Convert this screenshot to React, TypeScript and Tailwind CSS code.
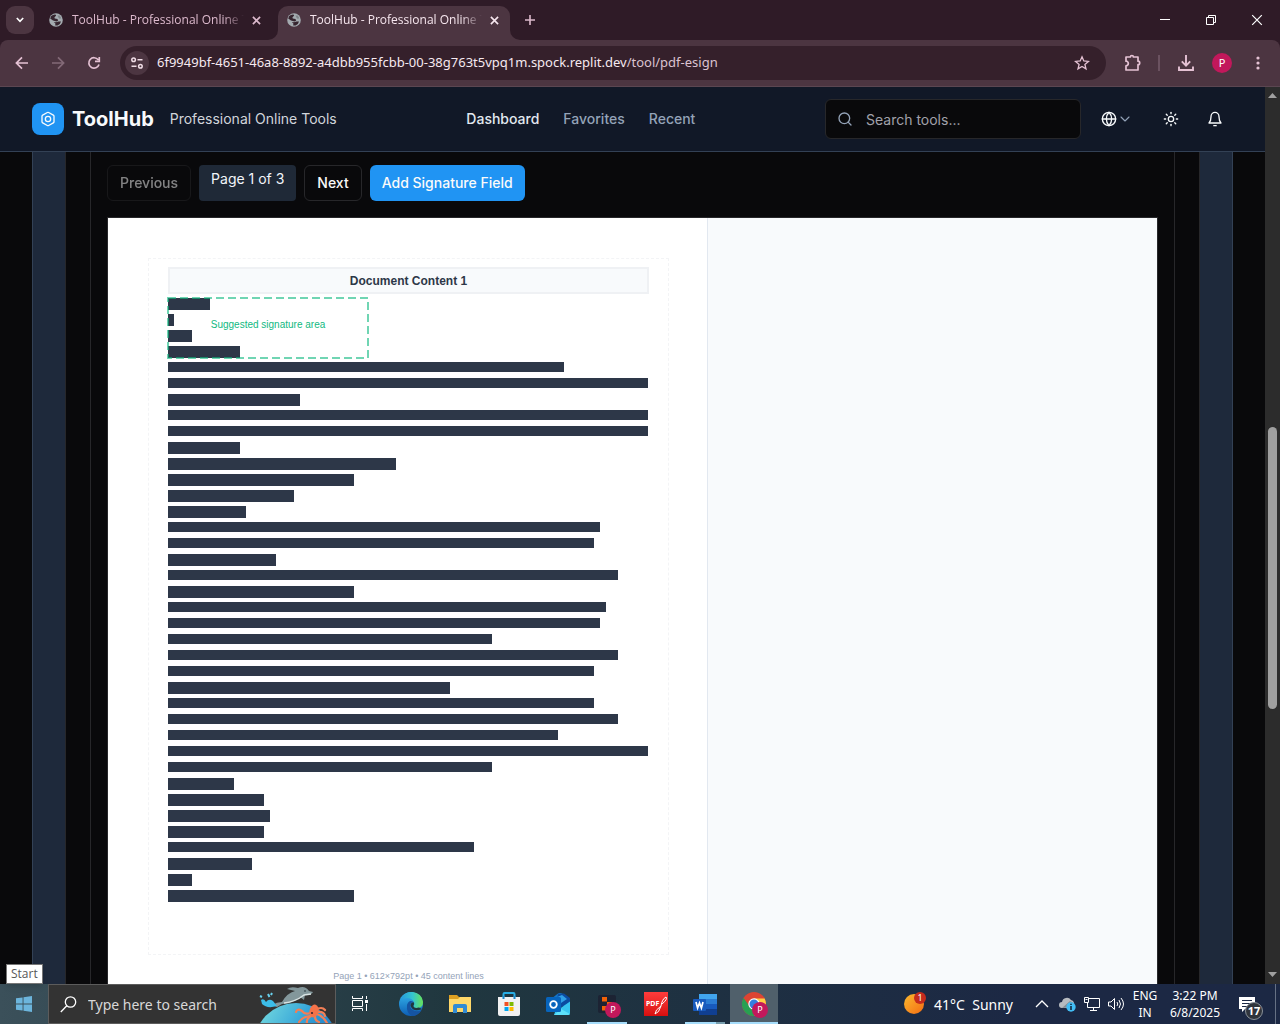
import React from "react";
import { Search, Globe, ChevronDown, Sun, Bolt } from "lucide-react";

const lineWidths = [
  42, 6, 24, 72, 396, 480, 132, 480, 480, 72, 228, 186, 126, 78, 432, 426, 108, 450, 186, 438, 432, 324, 450, 426, 282,
  426, 450, 390, 480, 324, 66, 96, 102, 96, 306, 84, 24, 186,
];

const SYSTEM = "font-['Noto_Sans',sans-serif]";

function FavGlobe() {
  return (
    <svg width="14" height="14" viewBox="0 0 14 14" className="shrink-0" aria-hidden="true">
      <circle cx="7" cy="7" r="6.8" fill="#a4abb0" />
      <path d="M2.2 3 Q4 1.2 6.4 1.4 L7.2 2.6 L5.4 4.4 L5.8 5.6 L8.4 6 L9.2 7.6 L7.6 8.4 L4 7.6 L1.2 5.6 Z" fill="#36252f" />
      <path d="M4.8 9 L7 9.2 L9.6 8.6 L12 8.4 Q11.6 11 8.6 12.4 L6.2 12.6 L6.4 10.6 Z" fill="#36252f" />
      <path d="M8.4 2.6 L10.6 2.4 L12.2 5 L10.8 6 L9.4 4.6 Z" fill="#7f8489" />
    </svg>
  );
}

function CloseX({ size = 10, width = 1.8 }: { size?: number; width?: number }) {
  return (
    <svg width={size} height={size} viewBox="0 0 10 10" stroke="currentColor" strokeWidth={width} fill="none" aria-hidden="true">
      <path d="M1 1 L9 9 M9 1 L1 9" />
    </svg>
  );
}

function TabLabel() {
  return (
    <>
      <FavGlobe />
      <span className="ml-[9px] w-[172px] whitespace-nowrap font-['Open_Sans',sans-serif] text-[12px] [mask-image:linear-gradient(to_right,black_88%,transparent)]">ToolHub - Professional Online T</span>
      <button aria-label="Close tab" className="ml-1.5 p-0.5"><CloseX size={9} /></button>
    </>
  );
}

function TabStrip() {
  return (
    <div className={`flex h-10 shrink-0 items-stretch bg-[#2f1b27] text-[12px] text-[#dcb9cc] ${SYSTEM}`}>
      <button aria-label="Search tabs" className="ml-1.5 mt-1.5 flex h-7 w-7 shrink-0 items-center justify-center rounded-[9px] bg-[#4c3541] text-white">
        <svg width="8" height="6" viewBox="0 0 8 6" fill="none" stroke="currentColor" strokeWidth="1.6"><path d="M0.8 1 L4 4.4 L7.2 1" /></svg>
      </button>
      <div className="ml-[15px] flex w-[229px] items-center"><TabLabel /></div>
      <div className="relative mt-1.5 flex w-[232px] items-center rounded-t-[10px] bg-[#4c3541] pb-1.5 pl-[9px] text-[#f6e6ee]">
        <svg className="absolute -left-2.5 bottom-0" width="10" height="10" aria-hidden="true"><path d="M10 0 V10 H0 A10 10 0 0 0 10 0" fill="#4c3541" /></svg>
        <svg className="absolute -right-2.5 bottom-0" width="10" height="10" aria-hidden="true"><path d="M0 0 V10 H10 A10 10 0 0 1 0 0" fill="#4c3541" /></svg>
        <TabLabel />
      </div>
      <button aria-label="New tab" className="ml-[15px]">
        <svg width="10" height="10" viewBox="0 0 10 10" stroke="currentColor" strokeWidth="1.6"><path d="M5 0 V10 M0 5 H10" /></svg>
      </button>
      <div className="ml-auto flex items-stretch text-white">
        <button aria-label="Minimize" className="flex w-[46px] items-center justify-center">
          <svg width="10" height="10"><path d="M0 4.5 H10" stroke="currentColor" /></svg>
        </button>
        <button aria-label="Restore" className="flex w-[46px] items-center justify-center">
          <svg width="10" height="10" fill="none" stroke="currentColor"><path d="M0.5 2.5 H7.5 V9.5 H0.5 Z M2.5 2.5 V0.5 H9.5 V7.5 H7.5" /></svg>
        </button>
        <button aria-label="Close" className="flex w-[46px] items-center justify-center"><CloseX size={12} width={1} /></button>
      </div>
    </div>
  );
}

function Toolbar() {
  return (
    <div className="shrink-0 bg-[#2f1b27]">
      <div className="flex h-[47px] items-center rounded-t-[8px] border-b border-[#5b4651] bg-[#4c3541] text-[#e5c2d4]">
        <button aria-label="Back" className="ml-[15px]">
          <svg width="14" height="14" fill="none" stroke="currentColor" strokeWidth="1.7"><path d="M13 7 H1.6 M7 1.4 L1.4 7 L7 12.6" /></svg>
        </button>
        <button aria-label="Forward" className="ml-[22px] text-[#836a77]">
          <svg width="14" height="14" fill="none" stroke="currentColor" strokeWidth="1.7"><path d="M1 7 H12.4 M7 1.4 L12.6 7 L7 12.6" /></svg>
        </button>
        <button aria-label="Reload" className="ml-[22px]">
          <svg width="14" height="14" fill="none" stroke="currentColor" strokeWidth="1.7"><path d="M12 8.5 A5.2 5.2 0 1 1 11.2 3.8 M12.3 1 V5.3 H8" /></svg>
        </button>
        <div className="ml-[19px] flex h-[34px] flex-1 items-center rounded-full bg-[#35202b] pl-[5px] pr-4">
          <button aria-label="Site information" className="flex h-6 w-6 items-center justify-center rounded-full bg-[#4c3541] text-[#f0dde6]">
            <svg width="12" height="12" fill="none" stroke="currentColor" strokeWidth="1.5"><circle cx="2.6" cy="2.8" r="1.8" /><path d="M6.5 2.8 H11.5 M0.5 9.2 H5.5" /><circle cx="9.4" cy="9.2" r="1.8" /></svg>
          </button>
          <span className={`ml-2 whitespace-nowrap text-[13px] text-[#f6e9f0] ${SYSTEM}`}>
            6f9949bf-4651-46a8-8892-a4dbb955fcbb-00-38g763t5vpq1m.spock.replit.dev<span className="text-[#dcc3d0]">/tool/pdf-esign</span>
          </span>
          <button aria-label="Bookmark this tab" className="ml-auto">
            <svg width="16" height="16" viewBox="0 0 16 16" fill="none" stroke="currentColor" strokeWidth="1.3"><path d="M8 1.8 L9.8 6 L14.4 6.4 L10.9 9.4 L12 13.8 L8 11.4 L4 13.8 L5.1 9.4 L1.6 6.4 L6.2 6 Z" /></svg>
          </button>
        </div>
        <button aria-label="Extensions" className="ml-[18px]">
          <svg width="18" height="18" viewBox="0 0 18 18" fill="none" stroke="currentColor" strokeWidth="1.7"><path d="M2 3 H6.4 A1.5 1.5 0 0 1 9.4 3 H14 V7.2 A1.6 1.6 0 0 1 14 10.6 V16 H2 V11.8 A2.3 2.3 0 0 0 2 7.2 Z" strokeLinejoin="round" /></svg>
        </button>
        <div className="ml-4 h-4 w-0.5 bg-[#6b5260]" />
        <button aria-label="Downloads" className="ml-[17px]">
          <svg width="18" height="18" viewBox="0 0 18 18" fill="none" stroke="currentColor" strokeWidth="1.9"><path d="M9 1 V11.4 M4.8 7.4 L9 11.6 L13.2 7.4 M2 12.5 V16 H16 V12.5" /></svg>
        </button>
        <button aria-label="Profile" className={`ml-[17px] flex h-5 w-5 items-center justify-center rounded-full bg-[#c2185b] text-[11px] text-white ${SYSTEM}`}>P</button>
        <button aria-label="Menu" className="ml-[24px] mr-5">
          <svg width="4" height="14" fill="currentColor"><circle cx="2" cy="2" r="1.6" /><circle cx="2" cy="7" r="1.6" /><circle cx="2" cy="12" r="1.6" /></svg>
        </button>
      </div>
    </div>
  );
}

function Header() {
  return (
    <header className="flex h-[65px] shrink-0 items-center justify-between border-b border-[#334155] bg-[#111827] px-8 text-[#f8fafc]">
      <div className="flex items-center">
        <div className="flex h-8 w-8 items-center justify-center rounded-lg bg-[#2094f3]"><Bolt size={16} strokeWidth={2} /></div>
        <span className="ml-2 text-xl font-bold">ToolHub</span>
        <span className="ml-4 text-sm text-[#d1d5db]">Professional Online Tools</span>
      </div>
      <nav className="flex gap-6 text-sm font-medium text-[#94a3b8]">
        <a href="#dashboard" className="text-[#e2e8f0]">Dashboard</a>
        <a href="#favorites">Favorites</a>
        <a href="#recent">Recent</a>
      </nav>
      <div className="flex items-center">
        <label className="flex h-10 w-64 items-center gap-3 rounded-md border border-[#27272a] bg-[#09090b] pl-[11px] pr-3">
          <Search size={16} strokeWidth={2} className="shrink-0 text-[#94a3b8]" />
          <input aria-label="Search tools" placeholder="Search tools..." className="ml-px w-full min-w-0 bg-transparent pt-0.5 text-sm outline-none placeholder:text-[#a1a1aa]" />
        </label>
        <button aria-label="Language" className="ml-3 flex h-9 items-center px-2">
          <Globe size={16} strokeWidth={2} />
          <ChevronDown size={16} strokeWidth={1.6} className="text-[#94a3b8]" />
        </button>
        <button aria-label="Theme" className="ml-3 flex h-9 w-9 items-center justify-center"><Sun size={16} strokeWidth={2} /></button>
        <button aria-label="Notifications" className="ml-2 flex h-9 w-9 items-center justify-center">
          <svg width="16" height="16" viewBox="0 0 24 24" fill="none" stroke="currentColor" strokeWidth="2"><path d="M3 18 H21 C18.5 15.5 18 13 18 8.5 A6 6.5 0 0 0 6 8.5 C6 13 5.5 15.5 3 18 M10.2 22 H13.8" strokeLinecap="round" strokeLinejoin="round" /></svg>
        </button>
      </div>
    </header>
  );
}

function DocumentPage() {
  return (
    <div className="w-[600px] shrink-0 border-r border-[#e2e8f0] bg-white pl-10 pr-[38px] pt-10 font-['Liberation_Sans',sans-serif]">
      <div className="border border-dashed border-[#f3f4f6] px-[19px] pb-12 pt-2">
        <h2 className="flex h-[27px] items-center justify-center border-2 border-[#eff1f4] bg-[#f8fafc] pt-px text-[12px] font-bold text-[#2d3748]">Document Content 1</h2>
        <div className="relative mt-1">
          {lineWidths.map((w, i) => (
            <div key={i} className="h-4">
              <div className={w > 300 ? "h-2.5 bg-[#2d3748]" : "h-3 bg-[#2d3748]"} style={{ width: w }} />
            </div>
          ))}
          <div className="absolute left-0 top-0 flex h-[60px] w-[200px] items-center justify-center text-[10px] text-[#10b981]">
            <svg className="absolute inset-0 overflow-visible" width="200" height="60" fill="none" aria-hidden="true">
              <rect width="200" height="60" stroke="#10b981" strokeOpacity="0.6" strokeWidth="2" strokeDasharray="8 4" />
            </svg>
            <span className="mb-2">Suggested signature area</span>
          </div>
        </div>
      </div>
      <p className="mt-[15px] text-center text-[9px] leading-3 text-[#94a3b8]">Page 1 • 612×792pt • 45 content lines</p>
    </div>
  );
}

function Workspace() {
  return (
    <main className="min-h-0 flex-1 overflow-hidden bg-[#09090b] px-8">
      <div className="border-x border-[#334155] bg-[#1e293b] px-8">
        <div className="border-x border-[#27272a] bg-[#09090b] px-6">
          <div className="border-x border-[#27272a] px-4 pt-[13px]">
            <div className="mb-4 flex gap-2 text-sm font-medium text-[#fafafa]">
              <button disabled className="h-9 rounded-md border border-[#27272a] px-3 opacity-50">Previous</button>
              <span className="h-9 rounded bg-[#1f2937] px-3 py-1 font-normal text-[#f1f5f9]">Page 1 of 3</span>
              <button className="h-9 rounded-md border border-[#27272a] px-3">Next</button>
              <button className="h-9 rounded-md bg-[#2094f3] px-3">Add Signature Field</button>
            </div>
            <div className="flex h-[1100px] border border-[#27272a] bg-[#f8fafc]"><DocumentPage /></div>
          </div>
        </div>
      </div>
    </main>
  );
}

function Scrollbar() {
  return (
    <div className="flex w-[15px] shrink-0 flex-col items-center bg-[#2c2c2c]" aria-hidden="true">
      <svg className="mt-1.5" width="9" height="5"><path d="M4.5 0 L9 5 H0 Z" fill="#a0a0a0" /></svg>
      <div className="mt-[329px] h-[282px] w-[9px] rounded-full bg-[#9f9f9f]" />
      <svg className="mb-[7px] mt-auto" width="9" height="5"><path d="M0 0 H9 L4.5 5 Z" fill="#a0a0a0" /></svg>
    </div>
  );
}

function SeaLife() {
  return (
    <svg width="80" height="38" viewBox="0 0 80 38" aria-hidden="true">
      <defs><linearGradient id="sea" x1="0" y1="0" x2="1" y2="0.6"><stop offset="0" stopColor="#7fe3df" /><stop offset=".5" stopColor="#37a6d9" /><stop offset="1" stopColor="#1267bd" /></linearGradient></defs>
      <circle cx="41" cy="60" r="42" fill="url(#sea)" />
      <path d="M17 20 Q22 17 27 17 Q32 8 40 6 L32 4 Q36 1 43 3 Q50 0 54 6 L58 7 Q57 10 50 10 L49 15 L45 12 Q37 19 27 19 L22 22 Z" fill="#83979b" />
      <path d="M29 18 Q40 17 49 10 L56 9" fill="none" stroke="#d9e4e4" strokeWidth="1.5" /><circle cx="50" cy="6" r=".8" fill="#203038" />
      <path d="M6 15 Q9 13 11 17 Q14 13 18 16 L22 21 Q12 24 7 19 Z" fill="#3cbde8" /><path d="M13 9 L14.5 12 M5 11 L7 12 M17 8 L16 10" stroke="#68d2ee" strokeWidth="2" />
      <path d="M55 28 Q50 30 47 26 Q42 23 41 27 M55 31 Q47 32 44 37 M56 31 Q51 34 52 38 M60 31 Q60 36 64 37 M62 29 Q68 31 72 38 M62 27 Q69 26 70 31 M60 25 Q67 21 70 25" fill="none" stroke="#f27e56" strokeWidth="2.2" strokeLinecap="round" />
      <ellipse cx="59" cy="26" rx="4.5" ry="6.5" transform="rotate(15 59 26)" fill="#f57249" /><circle cx="57" cy="28" r="1.1" fill="#3a2635" />
    </svg>
  );
}

function ProfileBadge() {
  return <span className="absolute left-[9px] top-2.5 flex h-4 w-4 items-center justify-center rounded-full bg-[#c2185b] text-[9px] text-white">P</span>;
}

const slot = "relative flex h-10 w-12 shrink-0 items-center justify-center";

function Taskbar() {
  return (
    <footer className={`relative flex h-10 shrink-0 bg-linear-to-r from-[#3b505a] via-[#20373f] via-35% to-[#1c2844] to-80% text-white ${SYSTEM}`}>
      <span className="absolute -top-5 left-1.5 border border-[#767676] bg-white px-1 font-['Open_Sans',sans-serif] text-[12px] leading-[18px] text-[#575757] shadow-md">Start</span>
      <button aria-label="Start" className={slot}>
        <svg width="16" height="16" fill="#6cb5dc"><path d="M0 2.3 L6.6 1.4 V7.5 H0 Z M7.5 1.2 L16 0 V7.5 H7.5 Z M0 8.5 H6.6 V14.6 L0 13.7 Z M7.5 8.5 H16 V16 L7.5 14.8 Z" /></svg>
      </button>
      <label className="relative flex w-72 shrink-0 items-center border border-[#5c5c5c] bg-[#333333]">
        <svg className="ml-[11px] shrink-0" width="17" height="17" fill="none" stroke="white" strokeWidth="1.3"><circle cx="10.5" cy="6" r="5.2" /><path d="M6.8 9.8 L0.8 16" /></svg>
        <input aria-label="Type here to search" placeholder="Type here to search" className="ml-[11px] w-40 bg-transparent text-[14px] outline-none placeholder:text-[#d8d8d8]" />
        <span className="absolute bottom-0 right-0"><SeaLife /></span>
      </label>
      <button aria-label="Task view" className={slot}>
        <svg width="16" height="16" fill="none" stroke="white"><path d="M0.5 0 V2.5 H10.5 V0 M0.5 4.5 H10.5 V10.5 H0.5 Z M0.5 15 V12.5 H10.5 V15 M14.5 0 V3 M14.5 8 V15" /><rect x="13" y="4" width="3" height="3" fill="white" stroke="none" /></svg>
      </button>
      <div className="ml-[3px] flex gap-px">
        <button aria-label="Edge" className={slot}>
          <svg width="24" height="24" viewBox="0 0 24 24"><defs><linearGradient id="edgeA"><stop stopColor="#2597dc" /><stop offset=".55" stopColor="#35c5cf" /><stop offset="1" stopColor="#67e457" /></linearGradient><linearGradient id="edgeB" x2="0" y2="1"><stop stopColor="#36b8ed" /><stop offset="1" stopColor="#0d5eb5" /></linearGradient></defs><circle cx="12" cy="12" r="12" fill="url(#edgeB)" /><path d="M1 9 Q4 0 13 0 Q23 1 24 10 Q24 16 18 16 Q14 16 14.4 14 Q16 12 15 10 Q13 6 8 6 Q3 6 1 9" fill="url(#edgeA)" /><path d="M14.5 10 Q10 7 8 13 Q7 21 13 24 Q19 24 22.5 18 Q17 21 12.5 17 Q10 14 12 11 Z" fill="#1554a2" /><path d="M14.5 10 Q11 11 11.5 14 Q14 20 22 17.5 L23 17 L20 15.6 Q15 17 14.3 14 Q16 12 14.5 10" fill="#20373f" /></svg>
        </button>
        <button aria-label="File Explorer" className={slot}>
          <svg width="22" height="19"><path d="M0 0 H8 L10 2 H21 V17 H0 Z" fill="#dda022" /><path d="M0 4 H9 L11 2 H22 V17 H0 Z" fill="#ffd869" /><path d="M4 18 V11 Q4 9 6 9 H16 Q18 9 18 11 V18 H14 V13 H8 V18 Z" fill="#328bd4" /></svg>
        </button>
        <button aria-label="Microsoft Store" className={slot}>
          <svg width="24" height="24"><path d="M6.5 7 V2 Q6.5 1 7.5 1 H16.5 Q17.5 1 17.5 2 V7" fill="none" stroke="#29aee5" strokeWidth="2" /><path d="M1 5 H23 V22 Q23 24 21 24 H3 Q1 24 1 22 Z" fill="#f1f1f2" /><path d="M6.5 4 V7 M17.5 4 V7" stroke="#1b87c9" strokeWidth="2" /><path d="M7.5 10 H11.5 V14 H7.5 Z" fill="#f25022" /><path d="M12.5 10 H16.5 V14 H12.5 Z" fill="#7fba00" /><path d="M7.5 15 H11.5 V19 H7.5 Z" fill="#00a4ef" /><path d="M12.5 15 H16.5 V19 H12.5 Z" fill="#ffb900" /></svg>
        </button>
        <button aria-label="Outlook" className={slot}>
          <svg width="24" height="24"><path d="M5 7 L12 1.5 Q14 0.5 16 1.5 L24 7 V14 H5 Z" fill="#1375c8" /><path d="M12 2 L18 1.5 L24 6 V10 L14 16 L10 12 Z" fill="#0b4ba0" /><path d="M9 6 L16 3 L21 7 L12 13 Z" fill="#2f9fe6" /><path d="M9 20 L24 9.5 V21 Q24 23 22 23 H8 Z" fill="#36c5f0" /><path d="M8 23 L15 17 L24 22 Q23 23 22 23 Z" fill="#5ce0fa" /><rect y="5" width="15" height="15" rx="1.5" fill="#0764bc" /><circle cx="7.5" cy="12.5" r="3.3" fill="none" stroke="white" strokeWidth="1.8" /></svg>
        </button>
        <button aria-label="Work browser" className={slot}>
          <svg width="18" height="18"><rect width="18" height="18" rx="2" fill="#1c2333" /><path d="M4 2 H9 V6.5 H4 Z M9 7 H14 V11 H9 Z M4 11 H9 V15.5 H4 Z" fill="#f26207" /></svg>
          <span className="absolute left-[13px] top-2"><ProfileBadge /></span>
          <span className="absolute inset-x-1 bottom-0 h-0.5 bg-[#a5dcfa]" />
        </button>
        <button aria-label="PDF editor" className={slot}>
          <span className="relative flex h-6 w-6 items-center bg-linear-to-b from-[#ff3b3b] to-[#d80d0d] pl-0.5 text-[7px] font-bold">PDF
            <svg className="absolute right-0 top-1" width="14" height="19" fill="none" stroke="white"><path d="M1 18 Q1 14 7 10 Q8 3 12 1 Q14 3 8 8 M7 10 Q5 17 1 18" /></svg>
          </span>
        </button>
        <button aria-label="Word" className={slot}>
          <svg width="24" height="22"><path d="M6 1 H24 V6 H6 Z" fill="#41a5ee" /><path d="M6 6 H24 V11 H6 Z" fill="#2b7cd3" /><path d="M6 11 H24 V16 H6 Z" fill="#185abd" /><path d="M6 16 H24 V22 H6 Z" fill="#103f91" /><rect y="6" width="13" height="12" rx="1" fill="#185abd" /><path d="M3 9 L4.6 15 L6.5 10 L8.4 15 L10 9" fill="none" stroke="white" strokeWidth="1.7" /></svg>
          <span className="absolute bottom-0 left-1 flex h-0.5 w-10 bg-[#789eae]"><span className="mr-px h-0.5 w-[31px] bg-[#a5dcfa]" /></span>
        </button>
        <button aria-label="Chrome" className={`${slot} bg-[#50606b]`}>
          <svg width="24" height="24"><circle cx="12" cy="12" r="12" fill="#dd4433" /><path d="M1.6 6 A12 12 0 0 0 12 24 L17 15 L8 15 Z" fill="#28a052" /><path d="M12 6.4 H22.6 A12 12 0 0 1 12 24 L17 15 Z" fill="#ffcd42" /><circle cx="12" cy="12" r="5.7" fill="white" /><circle cx="12" cy="12" r="4.5" fill="#347fe0" /></svg>
          <span className="absolute left-[13px] top-2"><ProfileBadge /></span>
          <span className="absolute inset-x-0 bottom-0 h-0.5 bg-[#a5dcfa]" />
        </button>
      </div>
      <div className="ml-auto flex items-center">
        <button className="flex items-center text-[14px]">
          <span className="relative mr-2.5 h-5 w-5 rounded-full bg-linear-to-br from-[#f9b82e] to-[#f36b12]"><span className="absolute -top-0.5 left-2.5 flex h-3 w-3 items-center justify-center rounded-full bg-[#c42b1c] text-[9px]">1</span></span>
          41°C&nbsp;&nbsp;Sunny
        </button>
        <button aria-label="Hidden icons" className="ml-[22px]"><svg width="14" height="8" fill="none" stroke="white" strokeWidth="1.3"><path d="M1 7 L7 1 L13 7" /></svg></button>
        <svg className="ml-2.5" width="17" height="15" aria-hidden="true"><path d="M3 11 A3 3 0 0 1 3 5 A5 5 0 0 1 12 3 Q16 4 15 9 L12 11 Z" fill="#b7bbc0" /><path d="M3 11 L11 4 L15 6 V10 Z" fill="#858c94" /><circle cx="12" cy="10" r="4.7" fill="#42bdf5" /><path d="M12 9 V13 M12 6.8 V8" stroke="#102035" strokeWidth="1.5" /></svg>
        <svg className="ml-2" width="16" height="14" fill="none" stroke="white" aria-hidden="true"><path d="M5 1.5 H15.5 V10.5 H3.5 V6 M9.5 10.5 V13.5 M6 13.5 H13 M0.5 0.5 H4.5 V5.5 H0.5 Z M1.5 2.5 H3.5" /></svg>
        <svg className="ml-2" width="17" height="14" fill="none" stroke="white" aria-hidden="true"><path d="M0.5 5 H3 L6.5 1.5 V12.5 L3 9 H0.5 Z M9 5 Q10.5 7 9 9 M11 3 Q14 7 11 11 M13 1 Q18 7 13 13" /></svg>
        <button className="ml-1.5 w-7 text-center text-[12px] leading-[17px]">ENG<br />IN</button>
        <button className="ml-1 w-16 text-center text-[12px] leading-[17px]">3:22 PM<br />6/8/2025</button>
        <button aria-label="17 notifications" className="relative ml-1.5 mr-3.5 h-6 w-7">
          <svg width="18" height="18" className="ml-1.5"><path d="M0 2 H16 V14 H6 L3 17 V14 H0 Z" fill="white" /><path d="M3 5.5 H13 M3 8.5 H13 M3 11.5 H10" stroke="#1b2945" /></svg>
          <span className="absolute -bottom-1 left-3 flex h-[18px] w-[18px] items-center justify-center rounded-full border border-[#8b929a] bg-[#30353d] text-[11px] font-bold">17</span>
        </button>
        <div className="mr-1 h-10 w-px bg-[#667184]" />
      </div>
    </footer>
  );
}

export default function App() {
  return (
    <div className="flex h-screen flex-col overflow-hidden bg-[#09090b] font-['Inter',sans-serif]">
      <TabStrip />
      <Toolbar />
      <div className="flex min-h-0 flex-1">
        <div className="flex min-w-0 flex-1 flex-col">
          <Header />
          <Workspace />
        </div>
        <Scrollbar />
      </div>
      <Taskbar />
    </div>
  );
}
